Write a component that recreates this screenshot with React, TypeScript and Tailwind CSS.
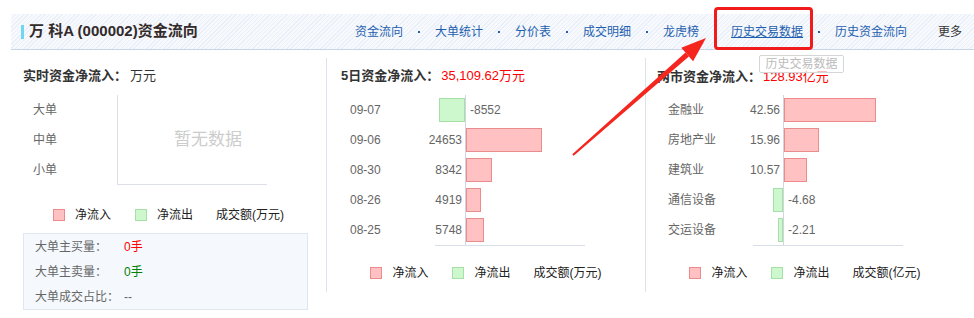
import React from 'react';

type Row = { label: string; value: number };

const fiveDay: Row[] = [
  { label: '09-07', value: -8552 },
  { label: '09-06', value: 24653 },
  { label: '08-30', value: 8342 },
  { label: '08-26', value: 4919 },
  { label: '08-25', value: 5748 },
];

const sectors: Row[] = [
  { label: '金融业', value: 42.56 },
  { label: '房地产业', value: 15.96 },
  { label: '建筑业', value: 10.57 },
  { label: '通信设备', value: -4.68 },
  { label: '交运设备', value: -2.21 },
];

const navItems = ['资金流向', '大单统计', '分价表', '成交明细', '龙虎榜', '历史交易数据', '历史资金流向'];

const Dot = ({ show = true }: { show?: boolean }) => (
  <span className="flex w-[32px] items-center justify-center">
    {show && <span className="h-[2px] w-[2px] bg-[#1f5faf]" />}
  </span>
);

const Legend = ({ unit }: { unit: string }) => (
  <div className="flex h-[20px] items-center justify-center text-[12px] text-[#222]">
    <span className="h-[12px] w-[12px] border border-[#ec8b8b] bg-[#ffc1c1]" />
    <span className="ml-[10px]">净流入</span>
    <span className="ml-[24px] h-[12px] w-[12px] border border-[#a6e0a6] bg-[#cdf7cd]" />
    <span className="ml-[10px]">净流出</span>
    <span className="ml-[23px]">成交额({unit})</span>
  </div>
);

const BarChart = ({ rows, scale, fmt }: { rows: Row[]; scale: number; fmt: (v: number) => string }) => (
  <div className="mt-[1px]">
    {rows.map((r) => {
      const w = Math.round(Math.abs(r.value) * scale);
      return (
        <div key={r.label} className="flex h-[30px] items-center text-[12px] text-[#666]">
          <div className="w-[85px] whitespace-nowrap">{r.label}</div>
          <div className="flex h-full w-[30px] items-center justify-end">
            {r.value >= 0 ? (
              <span className="mr-[3px] whitespace-nowrap">{fmt(r.value)}</span>
            ) : (
              <div style={{ width: w }} className="h-[24px] border border-[#a6e0a6] bg-[#cdf7cd]" />
            )}
          </div>
          <div className="flex h-full w-[120px] items-center border-l border-[#cfd6df]">
            {r.value >= 0 ? (
              <div style={{ width: w }} className="h-[24px] border border-[#ec8b8b] bg-[#ffc1c1]" />
            ) : (
              <span className="ml-[4px] whitespace-nowrap">{fmt(r.value)}</span>
            )}
          </div>
        </div>
      );
    })}
    <div className="ml-[85px] h-px w-[150px] bg-[#d8dfe8]" />
  </div>
);

export default function App() {
  return (
    <div className="relative h-[318px] w-[974px] overflow-hidden bg-white pl-[11px] pt-[14px] font-[Liberation_Sans,Noto_Sans_CJK_SC,sans-serif]">
      {/* header */}
      <div className="flex h-[36px] items-center border-b border-[#c6d5e8] bg-[repeating-linear-gradient(135deg,#e9f0f9_0px,#e9f0f9_1px,#f7f9fd_1px,#f7f9fd_3px)]">
        <div className="flex w-[344px] items-center pl-[10px]">
          <span className="h-[14px] w-[3px] bg-[#6fd6f3]" />
          <span className="ml-[5px] whitespace-pre text-[15px] font-bold text-[#332a2a]">万 科A (000002)资金流向</span>
        </div>
        <div className="flex items-center text-[12px] text-[#1f5faf]">
          {navItems.map((n, i) => (
            <React.Fragment key={n}>
              <span className={i === 5 ? 'underline' : ''}>{n}</span>
              {i < navItems.length - 1 ? <Dot show={i !== 4} /> : <span className="w-[31px]" />}
            </React.Fragment>
          ))}
          <span className="text-[#333]">更多</span>
        </div>
      </div>

      {/* columns */}
      <div className="mt-[8px] flex">
        <div className="h-[234px] w-[316px] border-r border-[#dde3ea]">
          <div className="flex h-[36px] items-center pl-[12px] text-[13px] text-[#333]">
            <span className="font-bold">实时资金净流入：</span>
            <span className="ml-[3px]">万元</span>
          </div>
          <div className="mt-[1px] flex pl-[22px]">
            <div className="w-[84px] text-[12px] text-[#666]">
              <div className="flex h-[30px] items-center">大单</div>
              <div className="flex h-[30px] items-center">中单</div>
              <div className="flex h-[30px] items-center">小单</div>
            </div>
            <div className="flex h-[90px] w-[150px] items-center border-b border-l border-[#dcdfe6] pl-[56px] text-[17px] text-[#cccccc]">
              暂无数据
            </div>
          </div>
          <div className="mt-[20px]">
            <Legend unit="万元" />
          </div>
          <div className="ml-[12px] mt-[8px] w-[285px] border border-[#dfe7f0] bg-[#f5f9fd] pl-[11px] text-[12px] text-[#666]">
            <div className="flex h-[25px] items-center">
              <span className="w-[89px]">大单主买量：</span>
              <span className="text-[#f00]">0手</span>
            </div>
            <div className="flex h-[25px] items-center">
              <span className="w-[89px]">大单主卖量：</span>
              <span className="text-[#008000]">0手</span>
            </div>
            <div className="flex h-[25px] items-center">
              <span className="w-[89px]">大单成交占比：</span>
              <span>--</span>
            </div>
          </div>
        </div>

        <div className="h-[234px] w-[319px] border-r border-[#dde3ea]">
          <div className="flex h-[36px] items-center pl-[14px] text-[13px]">
            <span className="font-bold text-[#333]">5日资金净流入：</span>
            <span className="ml-[2px] text-[#f00]">35,109.62万元</span>
          </div>
          <div className="pl-[23px]">
            <BarChart rows={fiveDay} scale={76 / 24653} fmt={(v) => String(v)} />
          </div>
          <div className="mt-[17px]">
            <Legend unit="万元" />
          </div>
        </div>

        <div className="h-[234px] flex-1 pr-[10px]">
          <div className="flex h-[36px] items-center pl-[11px] pt-[2px] text-[13px]">
            <span className="font-bold text-[#333]">两市资金净流入：</span>
            <span className="ml-[2px] text-[#f00]">128.93亿元</span>
          </div>
          <div className="pl-[22px]">
            <BarChart rows={sectors} scale={92 / 42.56} fmt={(v) => v.toFixed(2)} />
          </div>
          <div className="mt-[17px]">
            <Legend unit="亿元" />
          </div>
        </div>
      </div>

      {/* tooltip */}
      <div className="absolute left-[759px] top-[55px] flex h-[18px] w-[85px] items-center justify-center rounded-[2px] border border-[#d6d6d6] bg-white/70 text-[12px] text-[#bbbbbb]">
        历史交易数据
      </div>

      {/* red highlight box */}
      <div className="absolute left-[714px] top-[7px] h-[43px] w-[99px] rounded-[4px] border-[3px] border-[#f21b1b]" />

      {/* red arrow */}
      <svg className="absolute left-0 top-0" width="974" height="318" viewBox="0 0 974 318">
        <polygon points="572.3,154.2 573.7,155.8 688.9,56.4 685.5,52.6" fill="#f4261e" />
        <polygon points="706,38 693.1,61.3 681.3,47.7" fill="#f4261e" />
      </svg>
    </div>
  );
}
